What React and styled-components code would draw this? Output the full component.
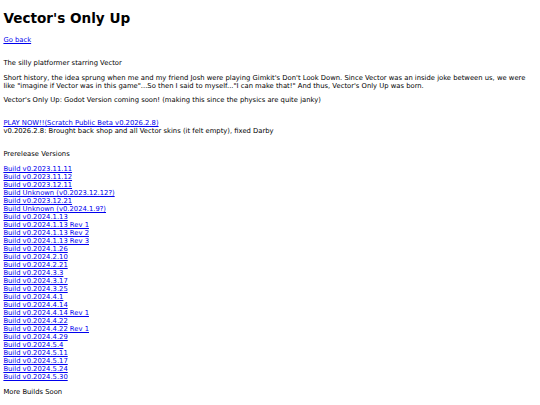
import React from "react";
import styled, { createGlobalStyle } from "styled-components";

const Global = createGlobalStyle`
  html, body { background: #fff; }
  body {
    margin: 3.4px;
    font-family: "DejaVu Sans", Verdana, sans-serif;
    font-size: 6.8px;
    line-height: 8px;
    color: #000;
  }
`;

const Title = styled.h1`
  font-size: 13.6px;
  line-height: 16px;
  font-weight: bold;
  margin: 7px 0 9.6px;
`;

const Paragraph = styled.p`
  margin: 6.8px 0;
`;

const Link = styled.a`
  color: #0000ee;
  text-decoration: underline;
`;

const BuildList = styled.div`
  display: flex;
  flex-direction: column;
  align-items: flex-start;
  margin: 5.8px 0 6.8px;
`;

const builds = [
  "Build v0.2023.11.11",
  "Build v0.2023.11.12",
  "Build v0.2023.12.11",
  "Build Unknown (v0.2023.12.12?)",
  "Build v0.2023.12.21",
  "Build Unknown (v0.2024.1.9?)",
  "Build v0.2024.1.13",
  "Build v0.2024.1.13 Rev 1",
  "Build v0.2024.1.13 Rev 2",
  "Build v0.2024.1.13 Rev 3",
  "Build v0.2024.1.26",
  "Build v0.2024.2.10",
  "Build v0.2024.2.21",
  "Build v0.2024.3.3",
  "Build v0.2024.3.17",
  "Build v0.2024.3.25",
  "Build v0.2024.4.1",
  "Build v0.2024.4.14",
  "Build v0.2024.4.14 Rev 1",
  "Build v0.2024.4.22",
  "Build v0.2024.4.22 Rev 1",
  "Build v0.2024.4.29",
  "Build v0.2024.5.4",
  "Build v0.2024.5.11",
  "Build v0.2024.5.17",
  "Build v0.2024.5.24",
  "Build v0.2024.5.30",
];

export default function App() {
  return (
    <>
      <Global />
      <Title>Vector's Only Up</Title>
      <Paragraph>
        <Link href="#">Go back</Link>
        <br />
        <br />
      </Paragraph>
      <Paragraph>The silly platformer starring Vector</Paragraph>
      <Paragraph>
        Short history, the idea sprung when me and my friend Josh were playing
        Gimkit's Don't Look Down. Since Vector was an inside joke between us, we
        were like "imagine if Vector was in this game"...So then I said to
        myself..."I can make that!" And thus, Vector's Only Up was born.
      </Paragraph>
      <Paragraph>
        Vector's Only Up: Godot Version coming soon! (making this since the
        physics are quite janky)
        <br />
        <br />
      </Paragraph>
      <Paragraph>
        <Link href="#">PLAY NOW!!(Scratch Public Beta v0.2026.2.8)</Link>
        <br />
        v0.2026.2.8: Brought back shop and all Vector skins (it felt empty),
        fixed Darby
        <br />
        <br />
      </Paragraph>
      <Paragraph>Prerelease Versions</Paragraph>
      <BuildList>
        {builds.map((b) => (
          <Link key={b} href="#">
            {b}
          </Link>
        ))}
      </BuildList>
      <Paragraph>More Builds Soon</Paragraph>
    </>
  );
}
